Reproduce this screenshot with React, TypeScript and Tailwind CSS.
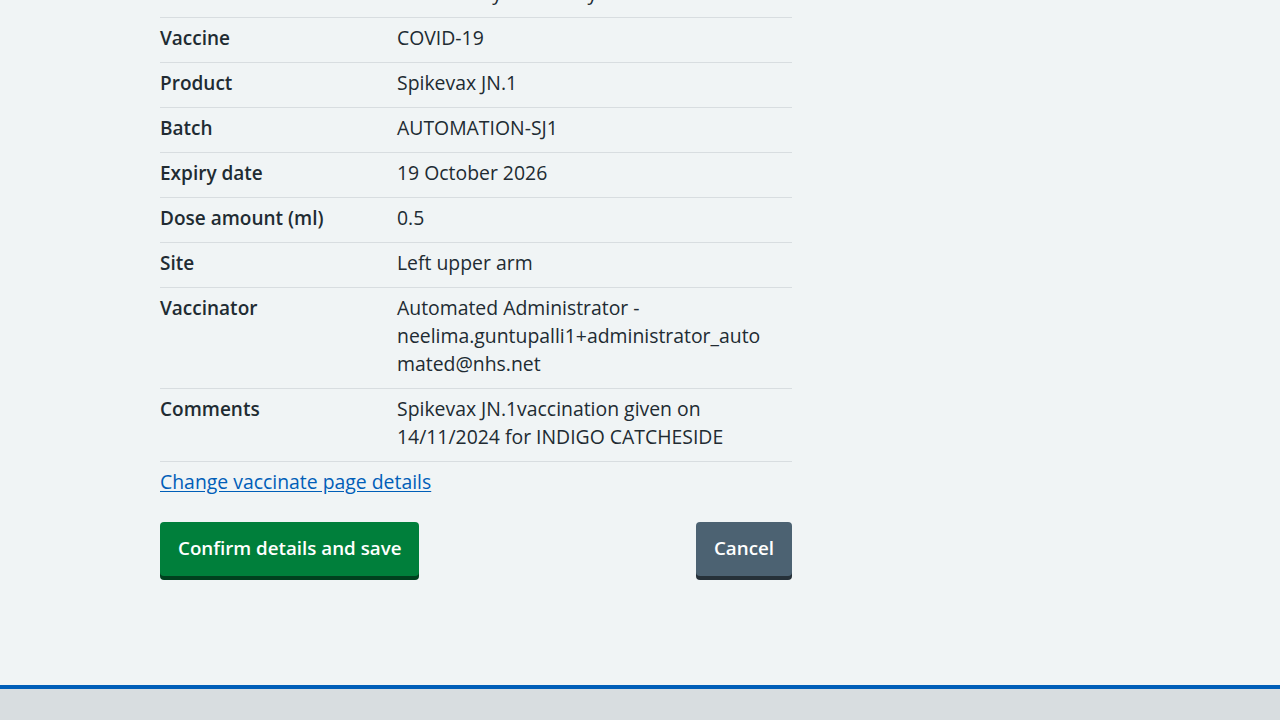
import React from "react";

const rows: { k: string; v: React.ReactNode }[] = [
  { k: "Care model", v: "Community Pharmacy" },
  { k: "Vaccine", v: "COVID-19" },
  { k: "Product", v: "Spikevax JN.1" },
  { k: "Batch", v: "AUTOMATION-SJ1" },
  { k: "Expiry date", v: "19 October 2026" },
  { k: "Dose amount (ml)", v: "0.5" },
  { k: "Site", v: "Left upper arm" },
  {
    k: "Vaccinator",
    v: (
      <>
        Automated Administrator -<br />
        neelima.guntupalli1+administrator_auto
        <br />
        mated@nhs.net
      </>
    ),
  },
  {
    k: "Comments",
    v: (
      <>
        Spikevax JN.1vaccination given on
        <br />
        14/11/2024 for INDIGO CATCHESIDE
      </>
    ),
  },
];

export default function App() {
  return (
    <div
      className="min-h-screen bg-[#f0f4f5] text-[#212b32] flex flex-col overflow-hidden"
      style={{ fontFamily: "'Open Sans', 'Liberation Sans', sans-serif" }}
    >
      <main className="w-[960px] mx-auto pb-[109px]">
        <div className="w-[632px]">
          <dl className="mt-[-27px] text-[19px] leading-[28px]">
            {rows.map((r) => (
              <div
                key={r.k}
                className="grid grid-cols-[237px_1fr] pt-[6px] pb-[10px] border-b border-[#d8dde0]"
              >
                <dt className="font-semibold">{r.k}</dt>
                <dd className="text-[19.4px]">{r.v}</dd>
              </div>
            ))}
          </dl>
          <p className="mt-[6px] text-[19.4px] leading-[28px]">
            <a href="#" className="text-[#005eb8] underline underline-offset-2">
              Change vaccinate page details
            </a>
          </p>
          <div className="mt-[26px] flex justify-between items-start">
            <button className="bg-[#007f3b] text-white font-semibold text-[18.75px] leading-[28px] px-[18px] pt-[12px] pb-[14px] rounded-[4px] shadow-[0_4px_0_#00401e]">
              Confirm details and save
            </button>
            <button className="bg-[#4c6272] text-white font-semibold text-[18.75px] leading-[28px] px-[18px] pt-[12px] pb-[14px] rounded-[4px] shadow-[0_4px_0_#263139]">
              Cancel
            </button>
          </div>
        </div>
      </main>
      <footer className="border-t-4 border-[#005eb8] bg-[#d8dde0] h-[120px]" />
    </div>
  );
}
